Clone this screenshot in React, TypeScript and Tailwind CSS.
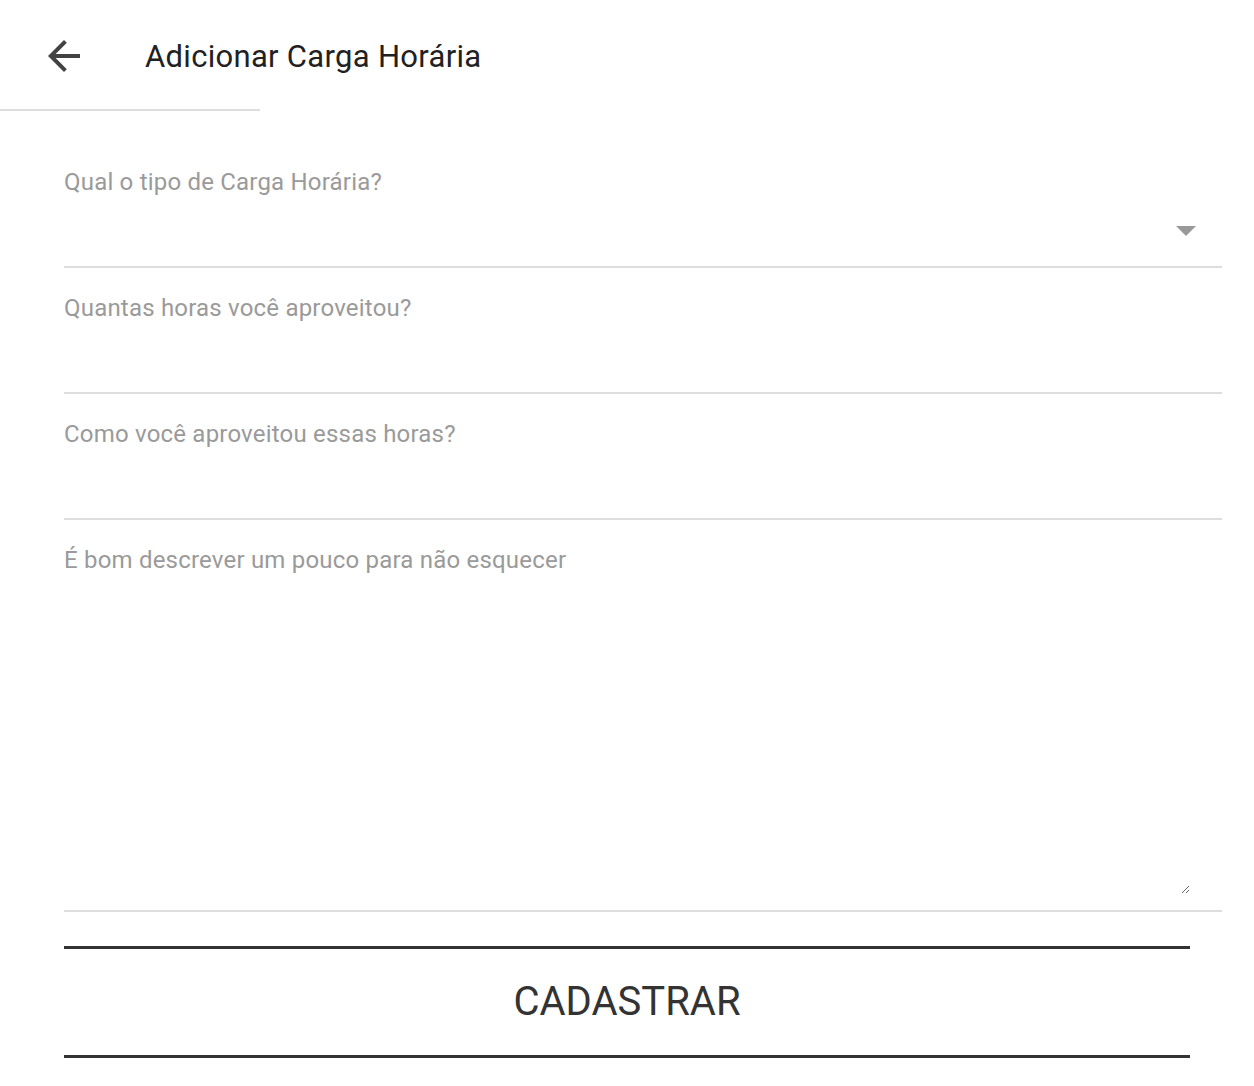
const font = { fontFamily: 'Roboto, "Noto Sans", sans-serif' }

function Field({ label }: { label: string }) {
  return (
    <div className="mt-[26px] border-b-2 border-[#dddddd]">
      <label className="block text-[24px] leading-[28px] tracking-[0.2px] text-[#9a9a9a]">{label}</label>
      <input className="block h-[70px] w-full bg-transparent text-[24px] outline-none" />
    </div>
  )
}

export default function App() {
  return (
    <div className="min-h-[1086px] bg-white" style={font}>
      <header className="relative h-[112px]">
        <div className="flex h-[112px] items-start pt-[32px]">
          <button className="ml-[40px] h-[48px] w-[48px] text-[#424242]">
            <svg viewBox="0 0 24 24" className="h-[48px] w-[48px]" fill="currentColor">
              <path d="M20 11H7.83l5.59-5.59L12 4l-8 8 8 8 1.41-1.41L7.83 13H20v-2z" />
            </svg>
          </button>
          <h1 className="ml-[57px] mt-[7px] text-[31px] leading-[36px] tracking-[0.3px] text-[#212121]">
            Adicionar Carga Horária
          </h1>
        </div>
        <div className="absolute bottom-[1px] left-0 h-[2px] w-[260px] bg-[#dddddd]" />
      </header>

      <form className="pl-[64px] pr-[32px]">
        <div className="mt-[56px] border-b-2 border-[#dddddd]">
          <label className="block text-[24px] leading-[28px] tracking-[0.2px] text-[#9a9a9a]">
            Qual o tipo de Carga Horária?
          </label>
          <div className="flex h-[70px] items-center justify-end pr-[26px]">
            <svg viewBox="0 0 20 10" className="h-[10px] w-[20px]">
              <path d="M0 0h20L10 10z" fill="#999999" />
            </svg>
          </div>
        </div>
        <Field label="Quantas horas você aproveitou?" />
        <Field label="Como você aproveitou essas horas?" />
        <div className="mt-[26px] border-b-2 border-[#dddddd]">
          <label className="block text-[24px] leading-[28px] tracking-[0.2px] text-[#9a9a9a]">
            É bom descrever um pouco para não esquecer
          </label>
          <textarea className="block h-[320px] w-[1126px] resize-y bg-transparent text-[24px] outline-none" />
          <div className="h-[16px]" />
        </div>
        <div className="mr-[32px] mt-[34px] flex h-[112px] items-center justify-center border-y-[3px] border-[#333333]">
          <span className="text-[40px] leading-[48px] text-[#333333]">CADASTRAR</span>
        </div>
      </form>
    </div>
  )
}
